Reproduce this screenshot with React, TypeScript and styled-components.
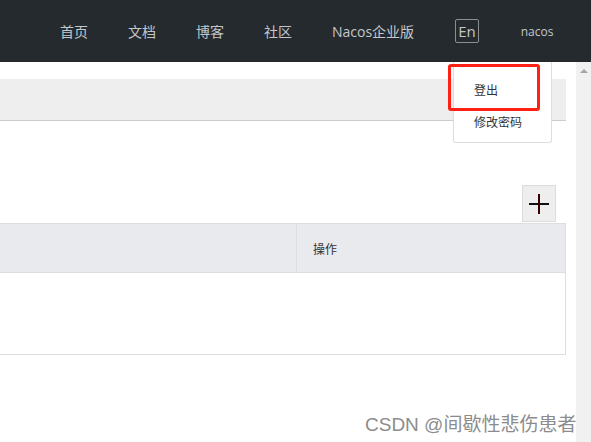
import React from 'react'
import styled, { createGlobalStyle } from 'styled-components'

const Global = createGlobalStyle`
  html, body {
    margin: 0;
    padding: 0;
    background: #fff;
    overflow: hidden;
  }
  body {
    font-family: "Open Sans", "Noto Sans CJK SC", sans-serif;
    font-size: 12px;
    color: #333;
  }
`

const Page = styled.div`
  position: relative;
  width: 591px;
  height: 442px;
  overflow: hidden;
`

const Header = styled.header`
  height: 62px;
  background: #252a2f;
  display: flex;
  align-items: center;
  padding-left: 60px;
  box-sizing: border-box;
`

const NavLink = styled.a<{ $gap?: number }>`
  color: #c4c7ca;
  font-size: 14px;
  text-decoration: none;
  margin-right: ${p => p.$gap ?? 40}px;
  white-space: nowrap;
`

const LangBox = styled.span`
  border: 1px solid #8a8f94;
  border-radius: 2px;
  color: #c4c7ca;
  font-size: 15px;
  padding: 0 2px;
  line-height: 22px;
  margin-right: 42px;
`

const UserName = styled.span`
  color: #c4c7ca;
  font-size: 12px;
`

const Main = styled.div`
  display: flex;
  height: 380px;
`

const Content = styled.div`
  width: 576px;
  box-sizing: border-box;
  padding-right: 10px;
  padding-top: 17px;
`

const Scrollbar = styled.div`
  width: 15px;
  background: #f1f1f1;
  display: flex;
  justify-content: center;
  padding-top: 7px;
  box-sizing: border-box;
`

const ArrowUp = styled.div`
  width: 0;
  height: 0;
  border-left: 4px solid transparent;
  border-right: 4px solid transparent;
  border-bottom: 4px solid #a3a3a3;
`

const Breadcrumb = styled.div`
  height: 41px;
  background: #eeeeee;
  border-bottom: 1px solid #cccccc;
`

const Toolbar = styled.div`
  display: flex;
  justify-content: flex-end;
  margin-top: 64px;
  padding-right: 10px;
`

const AddButton = styled.button`
  width: 34px;
  height: 37px;
  background: #eeeeee;
  border: 1px solid #dcdcdc;
  padding: 0;
  display: flex;
  align-items: center;
  justify-content: center;
`

const Table = styled.div`
  margin-top: 1px;
  border: 1px solid #dcdee2;
  border-left: none;
`

const HeadRow = styled.div`
  display: grid;
  grid-template-columns: 297px 1fr;
  height: 48px;
  background: #e9eaee;
  border-bottom: 1px solid #dcdee2;
`

const HeadCell = styled.div<{ $divider?: boolean }>`
  display: flex;
  align-items: center;
  padding-left: 16px;
  font-size: 12px;
  color: #333;
  font-family: "Noto Sans CJK SC", sans-serif;
  ${p => p.$divider && 'border-right: 1px solid #dcdee2;'}
`

const Body = styled.div`
  height: 81px;
`

const Dropdown = styled.div`
  position: absolute;
  left: 453px;
  top: 62px;
  width: 99px;
  height: 81px;
  background: #fff;
  border: 1px solid #dddddd;
  border-top: none;
  border-radius: 0 0 3px 3px;
  box-sizing: border-box;
  padding-top: 19px;
`

const MenuItem = styled.div`
  height: 32px;
  line-height: 18px;
  padding-left: 20px;
  font-size: 12px;
  color: #333;
  font-family: "Noto Sans CJK SC", sans-serif;
`

const Highlight = styled.div`
  position: absolute;
  left: 448px;
  top: 64px;
  width: 92px;
  height: 47px;
  border: 3px solid #ff2016;
  border-radius: 3px;
  box-sizing: border-box;
`

const Watermark = styled.div`
  position: absolute;
  left: 365px;
  top: 409px;
  font-size: 19px;
  color: #8c8c8c;
  font-family: "Liberation Sans", "Noto Sans CJK SC", sans-serif;
  white-space: nowrap;
`

const PlusIcon = () => (
  <svg width="20" height="20" viewBox="0 0 20 20">
    <rect x="0" y="9" width="20" height="2" fill="#111" />
    <rect x="9" y="0" width="2" height="20" fill="#3a0000" />
  </svg>
)

export default function App() {
  return (
    <Page>
      <Global />
      <Header>
        <NavLink $gap={40}>首页</NavLink>
        <NavLink $gap={40}>文档</NavLink>
        <NavLink $gap={40}>博客</NavLink>
        <NavLink $gap={40}>社区</NavLink>
        <NavLink $gap={41}>Nacos企业版</NavLink>
        <LangBox>En</LangBox>
        <UserName>nacos</UserName>
      </Header>
      <Main>
        <Content>
          <Breadcrumb />
          <Toolbar>
            <AddButton>
              <PlusIcon />
            </AddButton>
          </Toolbar>
          <Table>
            <HeadRow>
              <HeadCell $divider />
              <HeadCell>操作</HeadCell>
            </HeadRow>
            <Body />
          </Table>
        </Content>
        <Scrollbar>
          <ArrowUp />
        </Scrollbar>
      </Main>
      <Dropdown>
        <MenuItem>登出</MenuItem>
        <MenuItem>修改密码</MenuItem>
      </Dropdown>
      <Highlight />
      <Watermark>CSDN @间歇性悲伤患者</Watermark>
    </Page>
  )
}
